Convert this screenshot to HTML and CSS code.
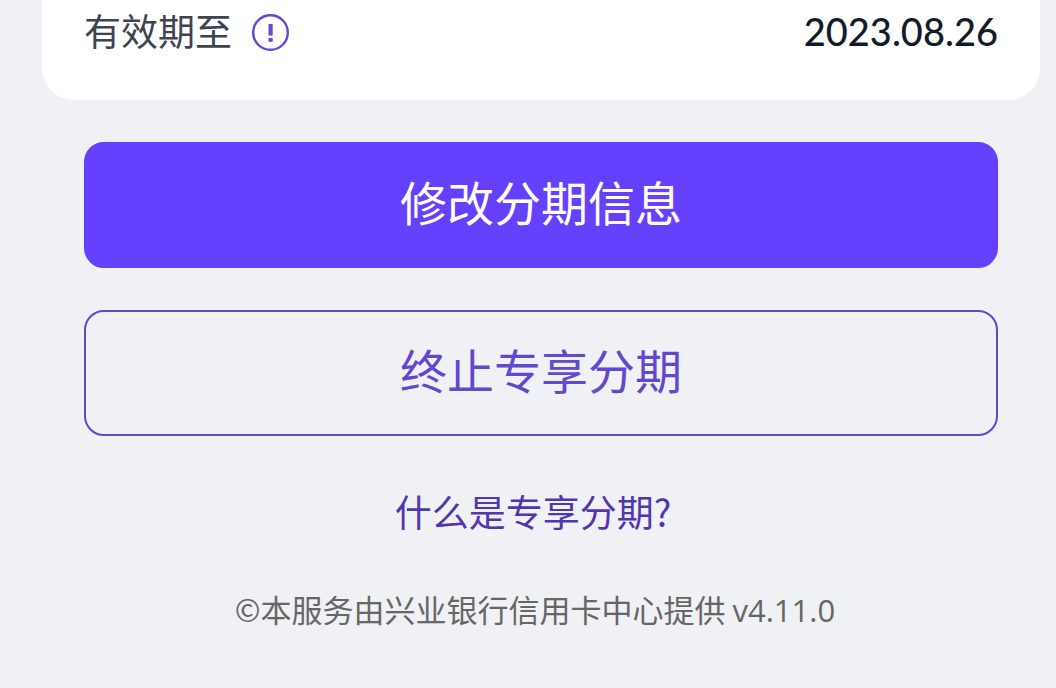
FILE: index.html
```html
<!DOCTYPE html>
<html lang="zh-CN">
<head>
    <meta charset="UTF-8">
    <meta name="viewport" content="width=device-width, initial-scale=1.0">
    <title>专享分期</title>
    <link rel="stylesheet" href="styles.css">
</head>
<body>

    <main class="page">
        <section class="card">
            <div class="row">
                <div class="row-label">
                    <span>有效期至</span>
                    <button type="button" class="info" aria-label="有效期说明">
                        <svg viewBox="0 0 38 38" aria-hidden="true">
                            <circle cx="18.5" cy="19.5" r="17.3" fill="none" stroke="currentColor" stroke-width="2.4"/>
                            <path d="M16.5 11h4.2v11.5h-4.2zM16.5 25h4.2v3.8h-4.2z" fill="currentColor"/>
                        </svg>
                    </button>
                </div>
                <span class="row-value">2023.08.26</span>
            </div>
        </section>

        <div class="actions">
            <button type="button" class="btn btn-primary">修改分期信息</button>
            <button type="button" class="btn btn-outline">终止专享分期</button>
        </div>

        <footer class="footer">
            <a href="#" class="help-link">什么是专享分期?</a>
            <p class="copyright">©本服务由兴业银行信用卡中心提供 <span class="version">v4.11.0</span></p>
        </footer>
    </main>

</body>
</html>
```
FILE: styles.css
```css
* {
    box-sizing: border-box;
}

body {
    margin: 0;
    background-color: #f0f1f5;
    font-family: "Noto Sans CJK SC", sans-serif;
}

.page {
    padding: 0 16px 0 42px;
}

.card {
    padding: 6px 42px 42px;
    background-color: #fff;
    border-radius: 0 0 32px 32px;
}

.row {
    display: flex;
    justify-content: space-between;
    align-items: center;
}

.row-label {
    display: flex;
    align-items: center;
    gap: 20px;
    font-size: 37px;
    line-height: 48px;
    color: #3f4450;
}

.row-label span {
    padding-bottom: 4px;
}

.info {
    display: flex;
    width: 38px;
    height: 38px;
    padding: 0;
    border: none;
    background: none;
    color: #6746d4;
    cursor: pointer;
}

.info svg {
    width: 100%;
    height: 100%;
}

.row-value {
    font-family: Lato, sans-serif;
    font-size: 38px;
    font-weight: 500;
    line-height: 48px;
    padding-bottom: 2px;
    color: #141b2b;
}

.actions {
    display: flex;
    flex-direction: column;
    gap: 42px;
    padding: 42px 42px 0;
}

.btn {
    padding: 25px 0 33px;
    border: 2px solid #6640ff;
    border-radius: 20px;
    font-family: inherit;
    font-size: 47px;
    line-height: 64px;
    cursor: pointer;
}

.btn-primary {
    background-color: #6640ff;
    color: #fff;
}

.btn-outline {
    background-color: transparent;
    border-color: #6347c8;
    color: #6347d0;
}

.footer {
    display: flex;
    flex-direction: column;
    align-items: center;
    gap: 50px;
    padding: 50px 12px 32px 0;
}

.help-link {
    padding-right: 4px;
    font-size: 37px;
    line-height: 50px;
    color: #5236b0;
    text-decoration: none;
}

.copyright {
    margin: 0;
    font-size: 31px;
    line-height: 46px;
    color: #666;
}

.version {
    font-family: "Open Sans", sans-serif;
}
```
